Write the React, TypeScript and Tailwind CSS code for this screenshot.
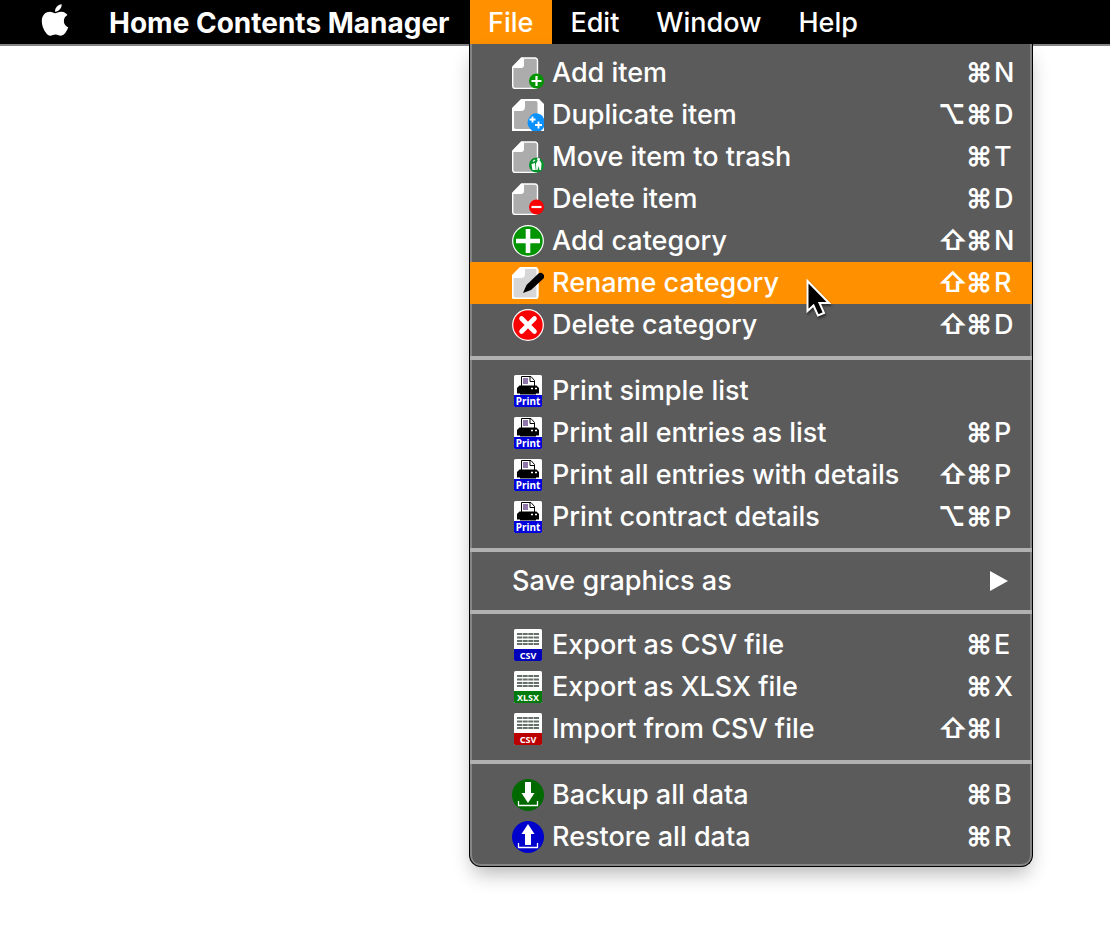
import type { ReactNode } from "react";
import { FaApple } from "react-icons/fa";

type Entry = { label: string; keys: string; icon: ReactNode; active?: boolean };

function Page({ fill = "#acacac", children }: { fill?: string; children: ReactNode }) {
  return (
    <svg viewBox="0 0 32 32" className="size-8" aria-hidden="true">
      <path d="M9.5 1H23a2.500 2.500 0 0 1 2.500 2.500V29a2.500 2.500 0 0 1-2.500 2.500H3A2.500 2.500 0 0 1 .7 29V10Z" fill={fill} stroke="#fff" strokeWidth="1.400" />
      <path d="M9.500 1H12v7a3 3 0 0 1-3 3H.7V9.800Z" fill="#fff" />
      {children}
    </svg>
  );
}

const addItem = (
  <Page>
    <circle cx="24.500" cy="24" r="7.500" fill="#009400" />
    <path d="M24.500 19v10M19.500 24h10" stroke="#fff" strokeWidth="2.200" />
  </Page>
);

const duplicateItem = (
  <svg viewBox="0 0 32 32" className="size-8" aria-hidden="true">
    <path d="M9 0H27L32 5V32H0V9Z" fill="#fff" />
    <path d="M13 2H24Q25.500 2 25.500 4V30H4Q2 30 2 28V12H9Q13 12 13 8Z" fill="#acacac" />
    <path d="M18 17.500A8 8 0 0 1 32 20V28A8 8 0 0 1 18 29.500A8.500 8.500 0 0 1 18 17.500Z" fill="#0a91ff" />
    <path d="M20.500 17.500v6M17.500 20.500h6M26.500 22.500v7M23 26h7" stroke="#fff" strokeWidth="1.800" />
  </svg>
);

const trashItem = (
  <Page>
    <circle cx="24.500" cy="24" r="7.500" fill="#00942a" />
    <path d="M19.500 23l3.500-1 .7 7h-3.300Z" fill="#fff" />
    <path d="M24 22.500l2-3.500 2 .5 1.500 3-.5 6.500h-1.600l-.6-4-1.300 4h-1.200Z" fill="#fff" />
    <circle cx="26.500" cy="18.300" r="1.400" fill="#fff" />
    <path d="M21 20.500l2-1.500" stroke="#fff" strokeWidth="1.200" />
  </Page>
);

const deleteItem = (
  <Page>
    <circle cx="24.500" cy="24" r="7.500" fill="#fb0000" />
    <path d="M19.500 24h10" stroke="#fff" strokeWidth="2.200" />
  </Page>
);

const addCategory = (
  <svg viewBox="0 0 32 32" className="size-8" aria-hidden="true">
    <circle cx="16" cy="16" r="15.300" fill="#009400" stroke="#fff" strokeWidth="1.200" />
    <path d="M16 4v24M4 16h24" stroke="#fff" strokeWidth="4.600" />
  </svg>
);

const renameCategory = (
  <Page fill="#dcdcdc">
    <path d="M8.500 1H23a2.500 2.500 0 0 1 2.500 2.500V29a2.500 2.500 0 0 1-2.500 2.500H3A2.500 2.500 0 0 1 .5 29V9Z" fill="#d6d6d6" stroke="#fff" strokeWidth="2.200" />
    <path d="M9 1h4v6a4 4 0 0 1-4 4H.5V9Z" fill="#fff" />
    <path d="M11 26l3.500-8L26.500 6.500a3.600 3.600 0 0 1 5 5L19 23Z" fill="#000" />
  </Page>
);

const deleteCategory = (
  <svg viewBox="0 0 32 32" className="size-8" aria-hidden="true">
    <circle cx="16" cy="16" r="15.300" fill="#fb0000" stroke="#fff" strokeWidth="1.200" />
    <path d="M9.500 9.500l13 13M22.500 9.500l-13 13" stroke="#fff" strokeWidth="4.600" strokeLinecap="round" />
  </svg>
);

function Tile({ text, fill, size, children }: { text: string; fill: string; size: number; children: ReactNode }) {
  return (
    <svg viewBox="0 0 32 32" className="size-8" aria-hidden="true">
      <rect x="2" width="28" height="32" rx="1.500" fill="#fff" />
      <path d="M2 20H30V30.500Q30 32 28.500 32H3.500Q2 32 2 30.500Z" fill={fill} />
      {children}
      <text x="16" y="29.500" textAnchor="middle" fontFamily="Noto Sans" fontWeight="700" fontSize={size} fill="#fff">
        {text}
      </text>
    </svg>
  );
}

const printer = (
  <Tile text="Print" fill="#0000dc" size={10}>
    <path d="M9.500 12V1.500h9.500l3.500 4V12" fill="#fff" stroke="#000" />
    <path d="M18 2v4.500h4.500" fill="none" stroke="#000" />
    <path d="M11 4h5M11 6h5M11 8h5" stroke="#6b4a8c" strokeWidth="1.600" />
    <path d="M7.500 10.500h17L27 13v5.500H5V13Z" fill="#000" />
    <path d="M8 18h16v1.500H8Z" fill="#000" />
    <path d="M19 13.500h2M23 13.500h2" stroke="#fff" strokeWidth="1.400" />
  </Tile>
);

function Sheet({ text, fill, size }: { text: string; fill: string; size: number }) {
  return (
    <Tile text={text} fill={fill} size={size}>
      <path d="M5 5h22M5 8.500h22M5 12h22M5 15h22" stroke="#66706a" strokeWidth="1.800" />
      <path d="M10.500 3v14M16 3v14M21.500 3v14" stroke="#fff" strokeWidth=".6" />
    </Tile>
  );
}

const backup = (
  <svg viewBox="0 0 32 32" className="size-8" aria-hidden="true">
    <circle cx="16" cy="16" r="16" fill="#006a00" />
    <path d="M13 3h6v11h3.500L16 24 9.500 14H13Z" fill="#fff" />
    <path d="M6.500 22v4.500h19V22" fill="none" stroke="#fff" strokeWidth="1.300" />
  </svg>
);

const restore = (
  <svg viewBox="0 0 32 32" className="size-8" aria-hidden="true">
    <circle cx="16" cy="16" r="16" fill="#0000cd" />
    <path d="M13 24h6V13h3.500L16 3 9.500 13H13Z" fill="#fff" />
    <path d="M6.500 22v4.500h19V22" fill="none" stroke="#fff" strokeWidth="1.300" />
  </svg>
);

const itemEntries: Entry[] = [
  { label: "Add item", keys: "⌘N", icon: addItem },
  { label: "Duplicate item", keys: "⌥⌘D", icon: duplicateItem },
  { label: "Move item to trash", keys: "⌘T", icon: trashItem },
  { label: "Delete item", keys: "⌘D", icon: deleteItem },
  { label: "Add category", keys: "⇧⌘N", icon: addCategory },
  { label: "Rename category", keys: "⇧⌘R", icon: renameCategory, active: true },
  { label: "Delete category", keys: "⇧⌘D", icon: deleteCategory },
];

const printEntries: Entry[] = [
  { label: "Print simple list", keys: "", icon: printer },
  { label: "Print all entries as list", keys: "⌘P", icon: printer },
  { label: "Print all entries with details", keys: "⇧⌘P", icon: printer },
  { label: "Print contract details", keys: "⌥⌘P", icon: printer },
];

const fileEntries: Entry[] = [
  { label: "Export as CSV file", keys: "⌘E", icon: <Sheet text="CSV" fill="#0000bb" size={9} /> },
  { label: "Export as XLSX file", keys: "⌘X", icon: <Sheet text="XLSX" fill="#007a0a" size={9} /> },
  { label: "Import from CSV file", keys: "⇧⌘I", icon: <Sheet text="CSV" fill="#bb0000" size={9} /> },
];

const dataEntries: Entry[] = [
  { label: "Backup all data", keys: "⌘B", icon: backup },
  { label: "Restore all data", keys: "⌘R", icon: restore },
];

const rowClass = "flex h-[42px] w-full items-center pl-[42px] pr-4 text-left";

function Cursor() {
  return (
    <svg viewBox="0 0 28 42" className="absolute left-[334px] top-4 z-10 h-[42px] w-7 overflow-visible drop-shadow-[1px_2px_1px_rgba(0,0,0,0.5)]" aria-hidden="true">
      <path d="M3.500 3V33l6-5.500 4.500 10 6-2.500-4.500-10H25Z" fill="#000" stroke="#fff" strokeWidth="2" />
    </svg>
  );
}

function Row({ label, keys, icon, active }: Entry) {
  return (
    <li role="none" className={active ? "relative bg-[#ff9100]" : "relative"}>
      <button type="button" role="menuitem" className={rowClass}>
        {icon}
        <span className="ml-2 flex-1 whitespace-nowrap">{label}</span>
        <span className="flex">
          {Array.from(keys).map((key, i, all) =>
            i === all.length - 1 ? (
              <span key={i} className="w-[22px]">{key}</span>
            ) : (
              <span key={i} className="w-7 font-bold">{key}</span>
            ),
          )}
        </span>
      </button>
      {active && <Cursor />}
    </li>
  );
}

function Group({ entries }: { entries: Entry[] }) {
  return (
    <>
      {entries.map((entry) => (
        <Row key={entry.label} {...entry} />
      ))}
    </>
  );
}

function Separator({ className }: { className: string }) {
  return <li role="separator" className={`h-1 bg-[#b1b1b1] ${className}`} />;
}

function FileMenu() {
  return (
    <ul
      role="menu"
      aria-label="File"
      className="absolute -left-px top-full w-[564px] rounded-b-xl border border-t-0 border-black bg-[#5b5b5b] pb-2 pt-2 text-[27px] font-medium leading-[42px] shadow-[inset_2px_0_0_#858585,inset_-2px_0_0_#858585,inset_0_-2px_0_#858585,0_10px_20px_-4px_rgba(0,0,0,0.3)]"
    >
      <Group entries={itemEntries} />
      <Separator className="my-[10px]" />
      <Group entries={printEntries} />
      <Separator className="mb-2 mt-[10px]" />
      <li role="none">
        <button type="button" role="menuitem" aria-haspopup="menu" className={rowClass}>
          <span className="flex-1">Save graphics as</span>
          <svg viewBox="0 0 18 20" className="mr-2 h-5 w-[18px]" aria-hidden="true">
            <path d="M0 0L18 10L0 20Z" fill="#fff" />
          </svg>
        </button>
      </li>
      <Separator className="mb-[10px] mt-2" />
      <Group entries={fileEntries} />
      <Separator className="my-[10px]" />
      <Group entries={dataEntries} />
    </ul>
  );
}

export default function App() {
  return (
    <div className="min-h-screen bg-white font-['Inter',sans-serif] text-white">
      <header className="border-b-2 border-[#858585] bg-black">
        <nav aria-label="Menu bar" className="flex h-11 items-stretch text-[27px]">
          <button type="button" aria-label="Apple menu" className="flex w-[109px] items-center pb-1 pl-[37px]">
            <FaApple className="size-9" />
          </button>
          <button type="button" className="w-[361px] whitespace-nowrap pt-0.5 text-left text-[28px] font-bold">
            Home Contents Manager
          </button>
          <div className="relative z-10">
            <button type="button" aria-haspopup="menu" aria-expanded="true" className="h-11 bg-[#ff9100] pl-[18px] pr-[19px] pt-0.5 font-medium">
              File
            </button>
            <FileMenu />
          </div>
          <button type="button" className="pl-[18px] pr-[19px] pt-0.5 font-medium">Edit</button>
          <button type="button" className="pl-[18px] pr-[19px] pt-0.5 font-medium">Window</button>
          <button type="button" className="pl-[18px] pr-[19px] pt-0.5 font-medium">Help</button>
        </nav>
      </header>
    </div>
  );
}
